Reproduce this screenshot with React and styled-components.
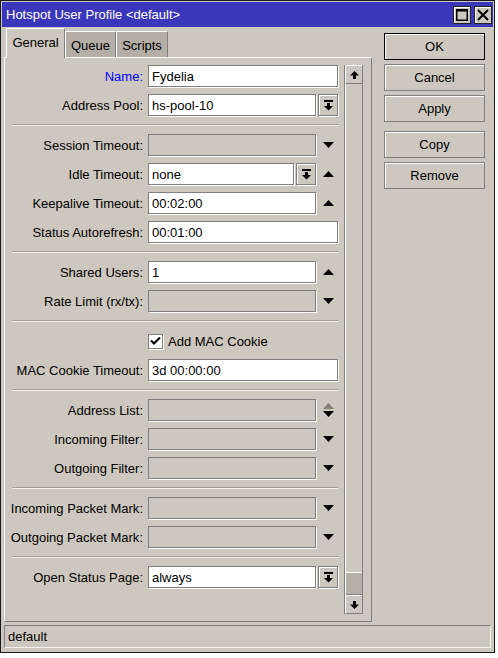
import React from "react";
import styled, { createGlobalStyle, css } from "styled-components";

const FACE = "#ccc8bf";
const SHADOW = "#7f7f7f";
const FONT = `"Liberation Sans", Arial, sans-serif`;

const Global = createGlobalStyle`
  html, body { margin: 0; padding: 0; background: #ffffff; }
  body { font-family: ${FONT}; font-size: 13px; color: #000; }
  * { box-sizing: border-box; }
`;

const Window = styled.div`
  width: 495px;
  height: 653px;
  border: 1px solid #1a1a1a;
  padding: 1px;
  background: ${FACE};
  display: flex;
  flex-direction: column;
`;

const TitleBar = styled.div`
  height: 25px;
  background: #3a37bb;
  color: #fff;
  display: flex;
  align-items: center;
  padding: 0 1px 0 4px;
  font-size: 13px;
`;

const TitleText = styled.span`
  flex: 1;
  white-space: nowrap;
`;

const CaptionBtn = styled.div`
  width: 18px;
  height: 18px;
  margin-left: 3px;
  background: ${FACE};
  border: 1px solid #222;
  box-shadow: inset 1px 1px 0 #fff;
  display: flex;
  align-items: center;
  justify-content: center;
`;

const Body = styled.div`
  display: flex;
  padding: 0 2px;
`;

const LeftCol = styled.div`
  width: 368px;
  display: flex;
  flex-direction: column;
`;

const TabBar = styled.div`
  display: flex;
  align-items: flex-end;
  height: 29px;
  padding-left: 2px;
  margin-top: 1px;
`;

const Tab = styled.div`
  width: ${(p) => p.$w}px;
  display: flex;
  align-items: center;
  justify-content: center;
  border-top: 1px solid #fff;
  border-left: 1px solid #fff;
  border-right: 1px solid ${SHADOW};
  ${(p) =>
    p.$active
      ? css`
          height: 30px;
          background: ${FACE};
          margin-bottom: -1px;
          position: relative;
          z-index: 1;
          padding-bottom: 3px;
        `
      : css`
          height: 26px;
          background: #b3afa6;
          padding-top: 1px;
        `}
`;

const Panel = styled.div`
  height: 565px;
  border-top: 1px solid #fff;
  border-left: 1px solid #fff;
  border-right: 1px solid ${SHADOW};
  border-bottom: 1px solid ${SHADOW};
  display: flex;
  padding: 7px 7px 7px 0;
`;

const Form = styled.div`
  width: 333px;
  display: flex;
  flex-direction: column;
  gap: 7px;
  margin-right: 6px;
`;

const Row = styled.div`
  height: 22px;
  display: flex;
  align-items: center;
`;

const Label = styled.div`
  width: 138px;
  margin-right: 5px;
  text-align: right;
  white-space: nowrap;
  color: ${(p) => (p.$blue ? "#0000ff" : "#000")};
`;

const FieldArea = styled.div`
  width: 190px;
  height: 22px;
  display: flex;
  align-items: stretch;
`;

const Input = styled.div`
  flex: 1;
  min-width: 0;
  border: 1px solid ${SHADOW};
  box-shadow: 1px 1px 0 #fff;
  background: ${(p) => (p.$disabled ? FACE : "#fff")};
  padding-left: 3px;
  display: flex;
  align-items: center;
  white-space: nowrap;
  overflow: hidden;
`;

const DropBtn = styled.div`
  width: 20px;
  margin-left: 2px;
  border: 1px solid ${SHADOW};
  box-shadow: inset 1px 1px 0 #fff, 1px 1px 0 #fff;
  background: ${FACE};
  display: flex;
  align-items: center;
  justify-content: center;
`;

const Trail = styled.div`
  width: 22px;
  padding-left: 3px;
  display: flex;
  flex-direction: column;
  align-items: center;
  justify-content: center;
  gap: 2px;
`;

const Separator = styled.div`
  height: 2px;
  margin: 1px 0 1px 7px;
  border-top: 1px solid #a29e96;
  border-bottom: 1px solid #f4f2ee;
`;

const CheckRow = styled.div`
  height: 22px;
  display: flex;
  align-items: center;
  padding-left: 143px;
`;

const CheckBox = styled.div`
  width: 15px;
  height: 15px;
  border: 1px solid ${SHADOW};
  box-shadow: 1px 1px 0 #fff;
  background: #fff;
  margin-right: 5px;
  display: flex;
  align-items: center;
  justify-content: center;
`;

const Scrollbar = styled.div`
  width: 19px;
  display: flex;
  flex-direction: column;
  border-left: 1px solid ${SHADOW};
  border-right: 1px solid ${SHADOW};
`;

const ScrollBtn = styled.div`
  height: 19px;
  background: ${FACE};
  border-top: 1px solid #fff;
  border-left: 1px solid #fff;
  border-bottom: 1px solid ${SHADOW};
  display: flex;
  align-items: center;
  justify-content: center;
`;

const Track = styled.div`
  flex: 1;
  border-left: 1px solid #fff;
  display: flex;
  flex-direction: column;
  justify-content: flex-end;
`;

const Thumb = styled.div`
  height: 23px;
  background: #b4b0a8;
  border-top: 1px solid #fff;
  border-bottom: 1px solid ${SHADOW};
`;

const RightCol = styled.div`
  width: 101px;
  margin-left: 12px;
  padding-top: 6px;
  display: flex;
  flex-direction: column;
  gap: 4px;
`;

const Button = styled.div`
  height: 27px;
  display: flex;
  align-items: center;
  justify-content: center;
  border: 1px solid ${(p) => (p.$default ? "#000" : SHADOW)};
  box-shadow: inset 1px 1px 0 #fff;
  background: ${FACE};
  margin-top: ${(p) => (p.$gapAbove ? 5 : 0)}px;
`;

const StatusBar = styled.div`
  height: 23px;
  margin: 3px 2px 0;
  border-top: 1px solid ${SHADOW};
  border-left: 1px solid ${SHADOW};
  border-bottom: 1px solid #f4f2ee;
  border-right: 1px solid #f4f2ee;
  display: flex;
  align-items: center;
  padding-left: 3px;
`;

/* small glyphs */
const TriDown = ({ color = "#000" }) => (
  <svg width="11" height="6" viewBox="0 0 11 6">
    <path d="M0 0h11L5.5 6z" fill={color} />
  </svg>
);

const TriUp = ({ color = "#000" }) => (
  <svg width="11" height="6" viewBox="0 0 11 6">
    <path d="M5.5 0L11 6H0z" fill={color} />
  </svg>
);

const DropGlyph = () => (
  <svg width="9" height="11" viewBox="0 0 9 11">
    <path d="M0 0h9v2H0zM3 3h3v3H3zM0 6h9l-4.5 4.5z" fill="#000" />
  </svg>
);

const ArrowUp = () => (
  <svg width="9" height="8" viewBox="0 0 9 8">
    <path d="M4.5 0L9 4.5H0zM3 4.5h3V8H3z" fill="#000" />
  </svg>
);

const ArrowDown = () => (
  <svg width="9" height="8" viewBox="0 0 9 8">
    <path d="M3 0h3v3.5H3zM0 3.5h9L4.5 8z" fill="#000" />
  </svg>
);

const CheckMark = () => (
  <svg width="11" height="10" viewBox="0 0 11 10">
    <path d="M1 4.5l3 3L10 1.5" stroke="#000" strokeWidth="2" fill="none" />
  </svg>
);

const sections = [
  [
    { label: "Name", value: "Fydelia", blue: true },
    { label: "Address Pool", value: "hs-pool-10", drop: true },
  ],
  [
    { label: "Session Timeout", disabled: true, trail: "down" },
    { label: "Idle Timeout", value: "none", drop: true, trail: "up" },
    { label: "Keepalive Timeout", value: "00:02:00", trail: "up" },
    { label: "Status Autorefresh", value: "00:01:00" },
  ],
  [
    { label: "Shared Users", value: "1", trail: "up" },
    { label: "Rate Limit (rx/tx)", disabled: true, trail: "down" },
  ],
  [
    { check: "Add MAC Cookie" },
    { label: "MAC Cookie Timeout", value: "3d 00:00:00" },
  ],
  [
    { label: "Address List", disabled: true, trail: "both" },
    { label: "Incoming Filter", disabled: true, trail: "down" },
    { label: "Outgoing Filter", disabled: true, trail: "down" },
  ],
  [
    { label: "Incoming Packet Mark", disabled: true, trail: "down" },
    { label: "Outgoing Packet Mark", disabled: true, trail: "down" },
  ],
  [{ label: "Open Status Page", value: "always", drop: true }],
];

const TrailIcon = ({ kind }) => {
  if (kind === "up") return <TriUp />;
  if (kind === "down") return <TriDown />;
  return (
    <>
      <TriUp color="#80806f" />
      <TriDown />
    </>
  );
};

const Field = ({ f }) => {
  if (f.check) {
    return (
      <CheckRow>
        <CheckBox>
          <CheckMark />
        </CheckBox>
        {f.check}
      </CheckRow>
    );
  }
  return (
    <Row>
      <Label $blue={f.blue}>{f.label}:</Label>
      <FieldArea>
        <Input $disabled={f.disabled}>{f.value}</Input>
        {f.drop && (
          <DropBtn>
            <DropGlyph />
          </DropBtn>
        )}
        {f.trail && (
          <Trail>
            <TrailIcon kind={f.trail} />
          </Trail>
        )}
      </FieldArea>
    </Row>
  );
};

export default function App() {
  return (
    <>
      <Global />
      <Window>
        <TitleBar>
          <TitleText>Hotspot User Profile &lt;default&gt;</TitleText>
          <CaptionBtn>
            <svg width="12" height="12" viewBox="0 0 12 12">
              <path d="M0 0h12v12H0z M1.5 2.5v8h9v-8z" fill="#000" fillRule="evenodd" />
            </svg>
          </CaptionBtn>
          <CaptionBtn>
            <svg width="12" height="12" viewBox="0 0 12 12">
              <path d="M1 1l10 10M11 1L1 11" stroke="#000" strokeWidth="2" />
            </svg>
          </CaptionBtn>
        </TitleBar>
        <Body>
          <LeftCol>
            <TabBar>
              <Tab $active $w={59}>General</Tab>
              <Tab $w={51}>Queue</Tab>
              <Tab $w={52}>Scripts</Tab>
            </TabBar>
            <Panel>
              <Form>
                {sections.map((sec, i) => (
                  <React.Fragment key={i}>
                    {i > 0 && <Separator />}
                    {sec.map((f, j) => (
                      <Field key={j} f={f} />
                    ))}
                  </React.Fragment>
                ))}
              </Form>
              <Scrollbar>
                <ScrollBtn>
                  <ArrowUp />
                </ScrollBtn>
                <Track>
                  <Thumb />
                </Track>
                <ScrollBtn>
                  <ArrowDown />
                </ScrollBtn>
              </Scrollbar>
            </Panel>
          </LeftCol>
          <RightCol>
            <Button $default>OK</Button>
            <Button>Cancel</Button>
            <Button>Apply</Button>
            <Button $gapAbove>Copy</Button>
            <Button>Remove</Button>
          </RightCol>
        </Body>
        <StatusBar>default</StatusBar>
      </Window>
    </>
  );
}
